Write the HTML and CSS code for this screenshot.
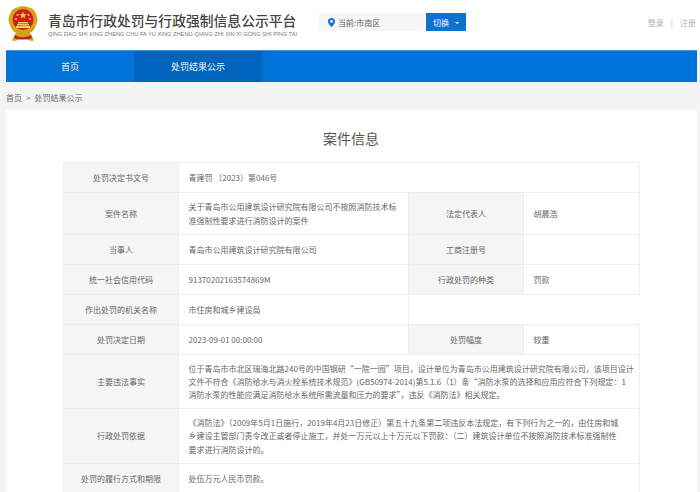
FILE: index.html
```html
<!DOCTYPE html>
<html lang="zh-CN">
<head>
<meta charset="utf-8">
<title>青岛市行政处罚与行政强制信息公示平台</title>
<link rel="stylesheet" href="styles.css">
</head>
<body>
<header class="top">
  <div class="brand">
    <svg class="emblem" width="30" height="38" viewBox="0 0 30 38">
      <path d="M15 1c3 0 5 1 7 2 3 0 5 3 6 6 2 3 2 8 0 11-1 4-3 6-6 8l3 5c1 1 1 3-1 3l-4-1c-1-1-2-2-3-2h-4c-1 0-2 1-3 2l-4 1c-2 0-2-2-1-3l3-5c-3-2-5-4-6-8C0 17 0 12 2 9c1-3 3-6 6-6 2-1 4-2 7-2z" fill="#d9a21b"/>
      <circle cx="15" cy="14.500" r="10.500" fill="#d0201c"/>
      <path d="M15 6.500l1 2.700h2.800l-2.300 1.700.9 2.700-2.400-1.700-2.400 1.700.9-2.700-2.300-1.700H14z" fill="#f5d33a"/>
      <circle cx="9.500" cy="10" r="1" fill="#f5d33a"/><circle cx="20.500" cy="10" r="1" fill="#f5d33a"/>
      <circle cx="8" cy="14" r="1" fill="#f5d33a"/><circle cx="22" cy="14" r="1" fill="#f5d33a"/>
      <path d="M9 19h12v1.500H9zM10 17h10v1.500H10zM8 21h14v2H8z" fill="#f2cf55"/>
      <path d="M7 30c5 3 11 3 16 0l1 3c-5 2-13 2-18 0z" fill="#b8261c"/>
    </svg>
    <div class="brand-text">
      <h1 class="site-title">青岛市行政处罚与行政强制信息公示平台</h1>
      <p class="site-pinyin">QING DAO SHI XING ZHENG CHU FA YU XING ZHENG QIANG ZHI XIN XI GONG SHI PING TAI</p>
    </div>
  </div>
  <div class="location">
    <div class="loc-box">
      <svg class="pin" width="7" height="9" viewBox="0 0 7 9"><path d="M3.500 0C1.500 0 0 1.500 0 3.400 0 5.700 3.500 9 3.500 9S7 5.700 7 3.400C7 1.500 5.500 0 3.500 0z" fill="#0a73d0"/><circle cx="3.500" cy="3.400" r="1.300" fill="#fff"/></svg>
      <span>当前:市南区</span>
    </div>
    <button class="switch">切换<span class="caret"></span></button>
  </div>
  <div class="auth"><span>登录</span><span class="sep">|</span><span>注册</span></div>
</header>
<div class="wrap">
  <nav class="nav">
    <a class="nav-item">首页</a>
    <a class="nav-item active">处罚结果公示</a>
  </nav>
  <div class="crumb"><span>首页</span><span class="gt">&gt;</span><span>处罚结果公示</span></div>
  <main class="card">
    <h2 class="card-title">案件信息</h2>
    <table class="info">
      <colgroup><col class="c-l"><col class="c-v"><col class="c-l"><col class="c-v2"></colgroup>
      <tr class="h30"><th>处罚决定书文号</th><td colspan="3">青建罚 〔2023〕第046号</td></tr>
      <tr class="h42"><th>案件名称</th><td>关于青岛市公用建筑设计研究院有限公司不按照消防技术标<br>准强制性要求进行消防设计的案件</td><th>法定代表人</th><td>胡晨浩</td></tr>
      <tr class="h30"><th>当事人</th><td>青岛市公用建筑设计研究院有限公司</td><th>工商注册号</th><td></td></tr>
      <tr class="h30"><th>统一社会信用代码</th><td>91370202163574869M</td><th>行政处罚的种类</th><td>罚款</td></tr>
      <tr class="h30"><th>作出处罚的机关名称</th><td>市住房和城乡建设局</td><td class="blank" colspan="2"></td></tr>
      <tr class="h30"><th>处罚决定日期</th><td>2023-09-01 00:00:00</td><th>处罚幅度</th><td>较重</td></tr>
      <tr class="h54"><th>主要违法事实</th><td colspan="3">位于青岛市市北区瑞海北路240号的中国钢研“一院一园”项目，设计单位为青岛市公用建筑设计研究院有限公司，该项目设计<br>文件不符合《消防给水与消火栓系统技术规范》(GB50974-2014)第5.1.6（1）条“消防水泵的选择和应用应符合下列规定：1<br>消防水泵的性能应满足消防给水系统所需流量和压力的要求”，违反《消防法》相关规定。</td></tr>
      <tr class="h55"><th>行政处罚依据</th><td colspan="3">《消防法》（2009年5月1日施行，2019年4月23日修正）第五十九条第二项违反本法规定，有下列行为之一的，由住房和城<br>乡建设主管部门责令改正或者停止施工，并处一万元以上十万元以下罚款：（二）建筑设计单位不按照消防技术标准强制性<br>要求进行消防设计的。</td></tr>
      <tr class="h30"><th>处罚的履行方式和期限</th><td colspan="3">处伍万元人民币罚款。</td></tr>
    </table>
  </main>
</div>
</body>
</html>
```

FILE: styles.css
```css
* { box-sizing: border-box; }
html, body { margin: 0; height: 492px; overflow: hidden; }
body {
  background: #f4f4f4;
  font-family: "Noto Sans CJK SC", "Liberation Sans", sans-serif;
  font-size: 8px;
  color: #666;
}
.top {
  height: 50px;
  background: #fff;
  display: flex;
  align-items: center;
  padding: 0 4px 0 8px;
}
.brand { display: flex; align-items: center; gap: 3px; width: 311px; }
.emblem { flex: none; margin-top: -2px; }
.brand-text { padding-left: 7px; margin-top: -3px; }
.site-title {
  margin: 0;
  font-size: 13.8px;
  line-height: 18px;
  font-weight: 500;
  color: #444;
  white-space: nowrap;
}
.site-pinyin {
  margin: 2px 0 0;
  font-family: "Liberation Sans", sans-serif;
  font-size: 5.7px;
  line-height: 6px;
  color: #777;
  white-space: nowrap;
}
.location { display: flex; height: 18px; margin-top: -6px; }
.loc-box {
  width: 107px;
  background: #f6f6f6;
  display: flex;
  align-items: center;
  gap: 3px;
  padding-left: 9px;
  color: #666;
}
.switch {
  width: 40px;
  border: 0;
  padding: 0;
  background: #0a73d0;
  color: #fff;
  font: inherit;
  font-size: 8px;
  display: flex;
  align-items: center;
  justify-content: center;
  gap: 6px;
}
.caret {
  width: 0;
  height: 0;
  border-left: 2px solid transparent;
  border-right: 2px solid transparent;
  border-top: 2px solid #fff;
  margin-top: 1px;
}
.auth {
  margin-left: auto;
  margin-top: -5px;
  display: flex;
  gap: 7px;
  color: #b0b0b0;
  font-size: 8px;
}
.wrap { width: 691px; margin-left: 6px; }
.nav {
  height: 32px;
  display: flex;
  background: #0073d8;
  border-top: 1px solid #3d98e4;
}
.nav-item {
  width: 128px;
  display: flex;
  align-items: center;
  justify-content: center;
  color: #f2f7fc;
  font-size: 9px;
}
.active { background: #0064bd; }
.crumb {
  height: 28px;
  display: flex;
  align-items: center;
  gap: 4px;
  padding-top: 2px;
  font-size: 8px;
  color: #666;
}
.card {
  background: #fff;
  padding: 0 58px 0 57px;
  height: 400px;
}
.card-title {
  margin: 0;
  height: 52px;
  padding-top: 18px;
  text-align: center;
  font-size: 14px;
  line-height: 20px;
  font-weight: 400;
  color: #555;
}
.info {
  width: 576px;
  table-layout: fixed;
  border-collapse: collapse;
}
.c-l { width: 115px; }
.c-v { width: 230px; }
.c-v2 { width: 116px; }
.info th, .info td {
  border: 1px solid #eee;
  line-height: 13.300px;
  padding: 0 0 0 9.500px;
  font-weight: 400;
  color: #666;
  text-align: left;
  white-space: nowrap;
}
.info th { background: #f5f5f5; text-align: center; padding: 0 2px; }
.info td.blank { border-right-color: #fff; border-bottom-color: #eee; }
.h30 { height: 30px; }
.h42 { height: 42px; }
.h54 { height: 54px; }
.h55 { height: 55px; }
```
